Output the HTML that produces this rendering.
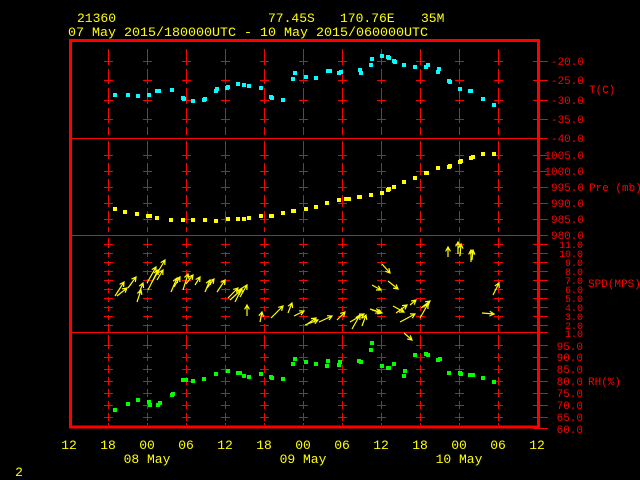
<!DOCTYPE html>
<html><head><meta charset="utf-8"><style>
html,body{margin:0;padding:0;background:#000;width:640px;height:480px;overflow:hidden}
svg{display:block}
text{font-family:"Liberation Mono",monospace}
</style></head><body>
<svg id="s" width="640" height="480" xmlns="http://www.w3.org/2000/svg">
<g id="grid"></g>
<g id="pts"></g>
<g id="arr" stroke="#ffff00" stroke-width="1.2" fill="none"></g>
<rect x="70.5" y="40.5" width="468" height="386.5" fill="none" stroke="#ff0000" stroke-width="3"/>
<g fill="#ffff00" font-size="13">
<text x="77" y="22">21360</text>
<text x="268" y="22">77.45S</text>
<text x="340" y="22">170.76E</text>
<text x="421" y="22">35M</text>
<text x="68" y="36" textLength="360" lengthAdjust="spacingAndGlyphs">07 May 2015/180000UTC - 10 May 2015/060000UTC</text>
</g>
<g fill="#ff0000" font-size="11" text-anchor="end">
<text x="584" y="65">-20.0</text><text x="584" y="84">-25.0</text><text x="584" y="104">-30.0</text><text x="584" y="123">-35.0</text><text x="584" y="142">-40.0</text>
<text x="584" y="159">1005.0</text><text x="584" y="175">1000.0</text><text x="584" y="191">995.0</text><text x="584" y="207">990.0</text><text x="584" y="223">985.0</text><text x="584" y="239">980.0</text>
</g>
<g fill="#ff0000" font-size="10" text-anchor="end">
<text x="583" y="248">11.0</text><text x="583" y="257">10.0</text><text x="583" y="266">9.0</text><text x="583" y="275">8.0</text><text x="583" y="284">7.0</text><text x="583" y="293">6.0</text><text x="583" y="302">5.0</text><text x="583" y="311">4.0</text><text x="583" y="320">3.0</text><text x="583" y="329">2.0</text><text x="583" y="337">1.0</text>
</g>
<g fill="#ff0000" font-size="11" text-anchor="end">
<text x="583" y="350">95.0</text><text x="583" y="361">90.0</text><text x="583" y="373">85.0</text><text x="583" y="385">80.0</text><text x="583" y="397">75.0</text><text x="583" y="409">70.0</text><text x="583" y="421">65.0</text><text x="583" y="433">60.0</text>
</g>
<g fill="#ff0000" font-size="11">
<text x="589" y="93">T(C)</text>
<text x="589" y="191">Pre (mb)</text>
<text x="588" y="287">SPD(MPS)</text>
<text x="588" y="385">RH(%)</text>
</g>
<g fill="#ffff00" font-size="13" text-anchor="middle">
<text x="69" y="449">12</text><text x="108" y="449">18</text><text x="147" y="449">00</text><text x="186" y="449">06</text><text x="225" y="449">12</text><text x="264" y="449">18</text><text x="303" y="449">00</text><text x="342" y="449">06</text><text x="381" y="449">12</text><text x="420" y="449">18</text><text x="459" y="449">00</text><text x="498" y="449">06</text><text x="537" y="449">12</text>
<text x="147" y="463">08 May</text><text x="303" y="463">09 May</text><text x="459" y="463">10 May</text>
<text x="19" y="476">2</text>
</g>
</svg>
<script>
var NS="http://www.w3.org/2000/svg";
function el(p,t,a){var e=document.createElementNS(NS,t);for(var k in a)e.setAttribute(k,a[k]);p.appendChild(e);return e;}
var g=document.getElementById('grid');
var panels=[[42,138,[61,80,100,119]],[138,235,[155,171,187,203,219]],[235,332,[244,253,262,271,280,289,298,307,316,325]],[332,426,[345,357,369,381,393,405,417]]];
var xs=[];for(var i=0;i<11;i++)xs.push(108+39*i);
panels.forEach(function(p){
  var ticks=p[2];
  xs.forEach(function(x){
    var prev=p[0]+(p[0]==42?7:3);
    var ends=ticks.concat([p[1]]);
    ends.forEach(function(t,j){
      var end=(j<ticks.length)?t+4:p[1]-3;
      el(g,'line',{x1:x+.5,y1:prev,x2:x+.5,y2:end,stroke:'#ff0000','stroke-width':1});
      prev=end+4;
    });
    ticks.forEach(function(t){el(g,'line',{x1:x-4,y1:t+.5,x2:x+5,y2:t+.5,stroke:'#ff0000','stroke-width':1});});
  });
  ticks.forEach(function(t){el(g,'line',{x1:533,y1:t+.5,x2:548,y2:t+.5,stroke:'#ff0000','stroke-width':1});});
});
[138,235,332].forEach(function(y){el(g,'line',{x1:72,y1:y+.5,x2:548,y2:y+.5,stroke:'#ff0000','stroke-width':1});});
el(g,'line',{x1:533,y1:61.5,x2:548,y2:61.5,stroke:'#ff0000'});
el(g,'line',{x1:533,y1:428.5,x2:548,y2:428.5,stroke:'#ff0000'});
var pts=document.getElementById('pts');
function P(list,c){for(var i=0;i<list.length;i+=2)el(pts,'rect',{x:list[i]-2,y:list[i+1]-2,width:4,height:4,fill:c});}
P([115,95,128,95,138,96,149,95,157,91,159,91,172,90,183,98,184,99,193,101,204,100,205,99,216,91,217,89,227,88,228,87,238,84,244,85,249,86,261,88,271,97,272,98,283,100,293,79,295,73,306,77,316,78,328,71,330,71,339,73,341,72,360,70,361,73,371,65,372,59,382,56,388,57,389,58,394,61,395,62,404,65,415,67,426,67,428,65,438,72,439,69,449,81,450,82,460,89,470,91,471,91,483,99,494,105],'#00ffff');
P([115,209,125,212,137,214,148,216,150,216,157,218,171,220,183,220,193,220,205,220,216,221,228,219,238,219,244,219,249,218,261,216,271,216,272,216,283,213,293,211,294,211,306,209,316,207,327,203,339,200,346,199,349,199,359,197,360,197,371,195,382,193,388,190,389,189,394,187,404,182,415,178,426,173,427,173,438,168,449,167,450,166,460,162,461,161,471,158,473,157,483,154,494,154],'#ffff00');
P([115,410,128,404,138,400,149,402,150,405,158,405,160,403,172,395,173,394,183,380,186,380,193,381,204,379,216,374,228,371,238,373,240,373,244,376,249,377,261,374,271,377,272,378,283,379,293,364,295,359,306,362,316,364,327,366,328,361,339,365,340,362,359,361,361,362,371,350,372,343,382,366,388,368,389,368,394,364,404,376,405,371,415,355,426,354,428,355,438,360,440,359,449,373,460,373,461,374,470,375,473,375,483,378,494,382],'#00ff00');
var A=document.getElementById('arr');
var W=[115,296,124,282,117,296,127,288,128,288,136,277,137,302,141,290,139,293,143,283,147,283,156,267,148,290,158,270,152,282,165,260,157,280,163,270,171,292,177,278,174,287,180,277,183,290,188,274,186,284,193,275,195,285,200,277,205,292,210,280,207,288,214,279,217,292,225,280,228,298,238,288,230,300,241,290,235,302,242,288,247,316,247,305,240,297,247,285,260,322,262,312,271,318,283,306,288,313,292,303,294,316,304,311,306,325,316,318,319,322,332,316,337,320,345,312,350,322,364,314,352,329,360,315,362,326,366,315,305,325,318,320,370,309,382,313,372,310,380,312,382,264,390,273,372,285,381,290,388,281,398,289,393,306,404,312,400,322,415,314,404,333,412,340,396,313,407,305,410,305,416,300,420,318,428,304,421,308,430,301,448,257,448,247,458,254,458,242,460,256,461,244,471,262,471,250,472,260,473,250,482,313,494,314,493,295,499,283];
for(var i=0;i<W.length;i+=4){
  var x1=W[i],y1=W[i+1],x2=W[i+2],y2=W[i+3];
  var a=Math.atan2(y2-y1,x2-x1),h=5;
  var d='M'+x1+' '+y1+'L'+x2+' '+y2+
   'M'+(x2-h*Math.cos(a-0.5)).toFixed(1)+' '+(y2-h*Math.sin(a-0.5)).toFixed(1)+'L'+x2+' '+y2+
   'L'+(x2-h*Math.cos(a+0.5)).toFixed(1)+' '+(y2-h*Math.sin(a+0.5)).toFixed(1);
  el(A,'path',{d:d});
}
</script>
</body></html>
